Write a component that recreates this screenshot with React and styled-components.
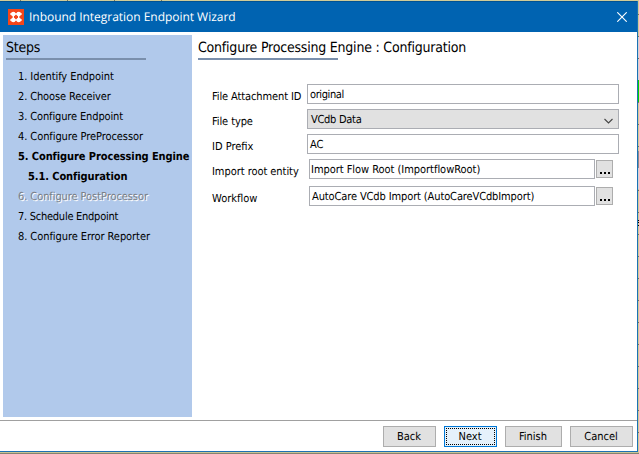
import React from "react";
import styled, { createGlobalStyle, css } from "styled-components";

const GlobalStyle = createGlobalStyle`
  * { box-sizing: border-box; }
  body { margin: 0; overflow: hidden; background: #fff; }
`;

const uiFont = css`
  font-family: "DejaVu Sans Condensed", "DejaVu Sans", sans-serif;
  font-stretch: condensed;
  font-size: 11px;
  line-height: 14px;
  color: #000;
  white-space: pre;
  text-rendering: geometricPrecision;
`;

const Desktop = styled.div`
  ${uiFont}
  width: 639px;
  height: 454px;
  display: grid;
  grid-template-columns: 638px 1px;
  grid-template-rows: 1px 451px 2px;
  background: #d0cb98;
`;

const TopStrip = styled.div`
  grid-column: 1 / -1;
  background:
    linear-gradient(#d0cb98, #d0cb98) 180px 0 / 459px 1px no-repeat,
    repeating-linear-gradient(90deg, #d0cb98 0 20px, #77745a 20px 21px, #d0cb98 21px 47px);
`;

const GridEdge = styled.div`
  background:
    linear-gradient(#00d000, #00d000) 0 79px / 1px 22px no-repeat,
    linear-gradient(#8c8c8c, #8c8c8c) 0 150px / 1px 17px no-repeat,
    linear-gradient(#d4d4d4, #d4d4d4) 0 167px / 1px 21px no-repeat,
    linear-gradient(#d4d4d4, #d4d4d4) 0 36px / 1px 21px no-repeat,
    linear-gradient(#d4d4d4, #d4d4d4) 0 58px / 1px 21px no-repeat,
    linear-gradient(#000, #000) 0 219px / 1px 1px no-repeat,
    linear-gradient(#000, #000) 0 221px / 1px 1px no-repeat,
    linear-gradient(#000, #000) 0 224px / 1px 1px no-repeat,
    repeating-linear-gradient(180deg, #d0cb98 0 13px, #77745a 13px 14px, #d0cb98 14px 22px);
`;

const BottomStrip = styled.div`
  grid-column: 1 / -1;
  background: linear-gradient(#c9c493 50%, #858372 50%);
`;

const Window = styled.div`
  display: flex;
  flex-direction: column;
  background: #fff;
  border-right: 1px solid #1c71b6;
  border-bottom: 1px solid #1c71b6;
`;

const TitleBar = styled.header`
  height: 31px;
  flex: none;
  display: flex;
  align-items: center;
  padding: 0 10px 1px 8px;
  background: #0063b1;
  border-top: 1px solid #005294;
`;

const TitleText = styled.h1`
  flex: 1;
  margin: 1px 0 0 5px;
  font: 400 12px/16px "Open Sans", "Noto Sans", sans-serif;
  letter-spacing: -0.03px;
  color: #fff;
`;

const Icon = styled.svg`
  display: block;
  flex: none;
`;

const Body = styled.main`
  height: 389px;
  flex: none;
  display: flex;
  padding: 3px 0 3px 3px;
  border-bottom: 1px solid #a0a0a0;
`;

const Sidebar = styled.nav`
  width: 189px;
  height: 382px;
  flex: none;
  padding: 3px 0 0 3px;
  background: #b1c9eb;
`;

const Heading = styled.h2`
  margin: 0;
  height: 20px;
  font-size: 14px;
  font-weight: 400;
  line-height: 20px;
  letter-spacing: -0.21px;
`;

const Rule = styled.div`
  width: 140px;
  height: 2px;
  background: #7a8fac;
`;

const StepList = styled.ol`
  list-style: none;
  margin: 7px 0 0;
  padding: 0;
`;

const Step = styled.li`
  height: 20px;
  line-height: 20px;
  padding-left: ${(p) => (p.$nested ? 22 : 12)}px;
  font-weight: ${(p) => (p.$bold ? 700 : 400)};
  letter-spacing: ${(p) => p.$spacing || 0}px;
  ${(p) => p.$disabled && css`
    color: #7b7f87;
    text-shadow: 1px 1px 0 #fff;
  `}
`;

const Panel = styled.section`
  flex: 1;
  padding: 3px 0 0 6px;
`;

const Form = styled.div`
  display: flex;
  flex-direction: column;
  padding: 24px 0 0 14px;
`;

const Row = styled.div`
  display: grid;
  grid-template-columns: 95px auto;
  height: 20px;
  margin-bottom: ${(p) => p.$gap || 5}px;
`;

const Label = styled.label`
  padding-top: 6px;
  letter-spacing: ${(p) => p.$spacing || 0}px;
`;

const Control = styled.div`
  display: flex;
  gap: 1px;
  padding-left: ${(p) => (p.$inset ? 2 : 0)}px;
`;

const Field = styled.div`
  display: flex;
  justify-content: space-between;
  width: ${(p) => p.$width}px;
  height: 20px;
  padding: 3px 5px 0 ${(p) => p.$pad}px;
  border: 1px solid #abadb3;
  background: ${(p) => (p.$select ? "#e1e1e1" : "#fff")};
  letter-spacing: ${(p) => p.$spacing || 0}px;
`;

const Browse = styled.button`
  display: flex;
  align-items: flex-end;
  justify-content: center;
  width: 17px;
  height: 18px;
  margin: 1px 0 0;
  padding: 0 0 3px;
  border: 1px solid #adadad;
  background: #e1e1e1;
`;

const Footer = styled.footer`
  display: flex;
  align-items: flex-start;
  justify-content: flex-end;
  gap: 8px;
  padding: 5px 4px 0 0;
`;

const Button = styled.button`
  ${uiFont}
  width: ${(p) => p.$width}px;
  height: 21px;
  padding: 0 1px 0 0;
  border: 1px solid ${(p) => (p.$focused ? "#0078d7" : "#adadad")};
  background: ${(p) => (p.$focused ? "#e5f1fb" : "#e1e1e1")};
  ${(p) => p.$focused && css`
    outline: 1px dotted #000;
    outline-offset: -3px;
  `}
`;

const steps = [
  { text: "1. Identify Endpoint", spacing: -0.07 },
  { text: "2. Choose Receiver", spacing: -0.13 },
  { text: "3. Configure Endpoint", spacing: -0.13 },
  { text: "4. Configure PreProcessor", spacing: -0.08 },
  { text: "5. Configure Processing Engine", bold: true, spacing: -0.1 },
  { text: "5.1. Configuration", bold: true, nested: true, spacing: -0.1 },
  { text: "6. Configure PostProcessor", disabled: true, spacing: -0.08 },
  { text: "7. Schedule Endpoint", spacing: -0.26 },
  { text: "8. Configure Error Reporter", spacing: -0.07 },
];

const fields = [
  { label: "File Attachment ID", labelSpacing: -0.11, value: "original", width: 312, pad: 2, spacing: -0.4 },
  { label: "File type", labelSpacing: -0.1, value: "VCdb Data", width: 312, pad: 3, select: true, spacing: -0.28 },
  { label: "ID Prefix", labelSpacing: 0, value: "AC", width: 312, pad: 2 },
  { label: "Import root entity", labelSpacing: -0.05, value: "Import Flow Root (ImportflowRoot)", width: 286, pad: 1, browse: true, gap: 7, spacing: -0.04 },
  { label: "Workflow", value: "AutoCare VCdb Import (AutoCareVCdbImport)", width: 286, pad: 2, browse: true, spacing: -0.12 },
];

const buttons = [
  { text: "Back", width: 53 },
  { text: "Next", width: 53, focused: true },
  { text: "Finish", width: 57 },
  { text: "Cancel", width: 63 },
];

function AppLogo() {
  return (
    <Icon width="16" height="16" viewBox="0 0 16 16">
      <rect width="16" height="16" fill="#f4461a" />
      <g fill="#fff">
        <circle cx="5.3" cy="5" r="2.3" />
        <circle cx="10.7" cy="5" r="2.3" />
        <circle cx="5.3" cy="11" r="2.3" />
        <circle cx="10.7" cy="11" r="2.3" />
        <path d="M2.2 4.3h11.6v1.4H2.2zM2.2 10.3h11.6v1.4H2.2zM4.6 5h1.4v6H4.6zM10 5h1.4v6H10z" />
      </g>
    </Icon>
  );
}

export default function App() {
  return (
    <Desktop>
      <GlobalStyle />
      <TopStrip />
      <Window>
        <TitleBar>
          <AppLogo />
          <TitleText>Inbound Integration Endpoint Wizard</TitleText>
          <Icon width="10" height="10" viewBox="0 0 10 10">
            <path d="M0.3 0.3L9.7 9.7M9.7 0.3L0.3 9.7" stroke="#fff" strokeWidth="1.1" />
          </Icon>
        </TitleBar>
        <Body>
          <Sidebar>
            <Heading>Steps</Heading>
            <Rule />
            <StepList>
              {steps.map((s) => (
                <Step key={s.text} $bold={s.bold} $nested={s.nested} $disabled={s.disabled} $spacing={s.spacing}>
                  {s.text}
                </Step>
              ))}
            </StepList>
          </Sidebar>
          <Panel>
            <Heading>Configure Processing Engine : Configuration</Heading>
            <Rule />
            <Form>
              {fields.map((f) => (
                <Row key={f.label} $gap={f.gap}>
                  <Label $spacing={f.labelSpacing}>{f.label}</Label>
                  <Control $inset={f.browse}>
                    <Field $width={f.width} $pad={f.pad} $select={f.select} $spacing={f.spacing}>
                      {f.value}
                      {f.select && (
                        <Icon width="9" height="14" viewBox="0 0 9 14">
                          <path d="M0.5 6L4.5 10L8.5 6" fill="none" stroke="#444" strokeWidth="1.1" />
                        </Icon>
                      )}
                    </Field>
                    {f.browse && (
                      <Browse aria-label="Browse">
                        <Icon width="10" height="2" viewBox="0 0 10 2">
                          <path d="M0 0h2v2H0zM4 0h2v2H4zM8 0h2v2H8z" />
                        </Icon>
                      </Browse>
                    )}
                  </Control>
                </Row>
              ))}
            </Form>
          </Panel>
        </Body>
        <Footer>
          {buttons.map((b) => (
            <Button key={b.text} $width={b.width} $focused={b.focused}>
              {b.text}
            </Button>
          ))}
        </Footer>
      </Window>
      <GridEdge />
      <BottomStrip />
    </Desktop>
  );
}
